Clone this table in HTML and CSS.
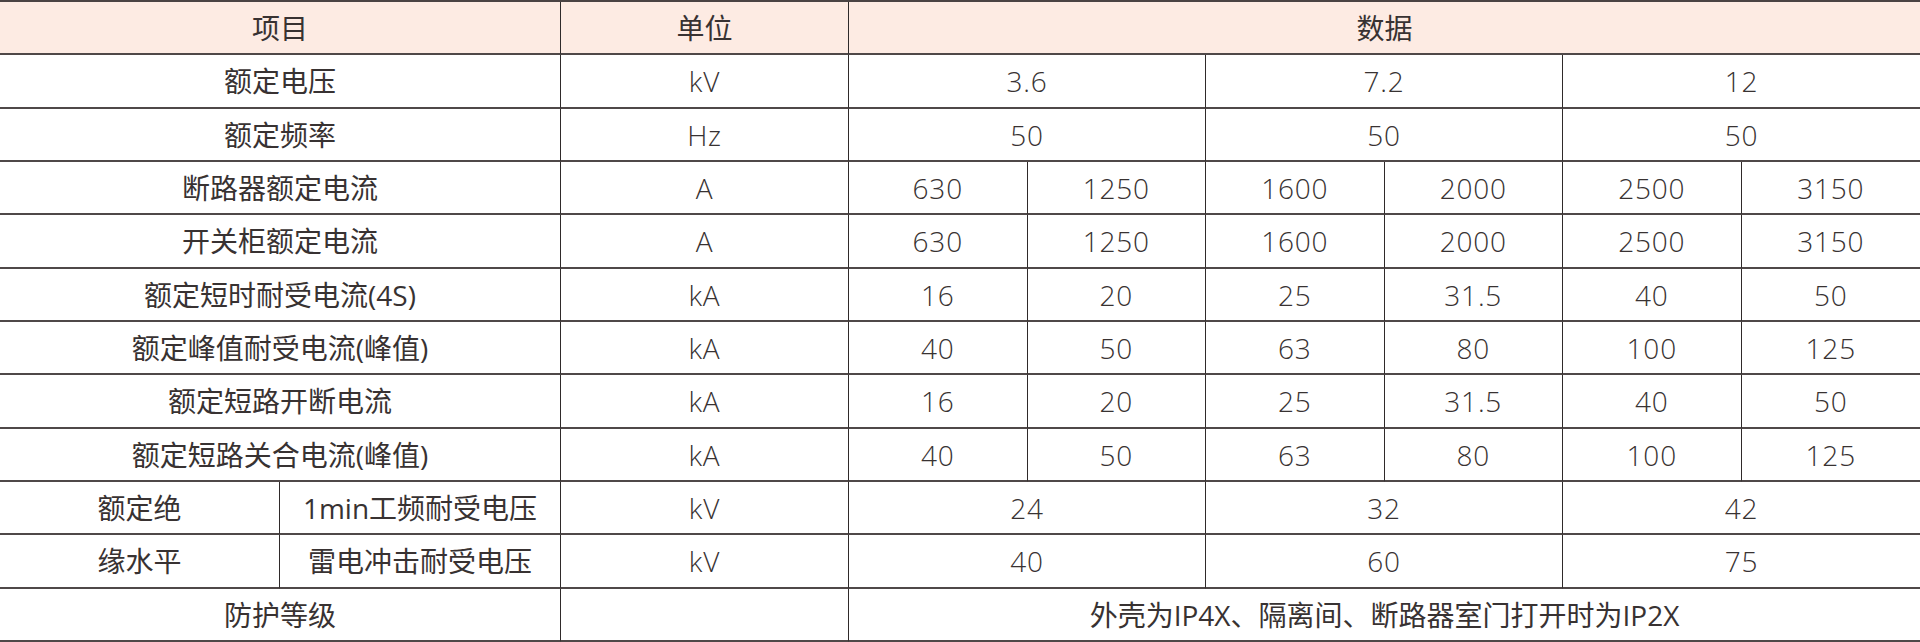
FILE: index.html
```html
<!DOCTYPE html>
<html lang="zh-CN">
<head>
<meta charset="utf-8">
<title>技术参数</title>
<link rel="stylesheet" href="styles.css">
</head>
<body>
<div class="spec">
  <div class="c head s2">项目</div>
  <div class="c head">单位</div>
  <div class="c head s6 last">数据</div>

  <div class="c s2">额定电压</div>
  <div class="c n">kV</div>
  <div class="c n s2">3.6</div>
  <div class="c n s2">7.2</div>
  <div class="c n s2 last">12</div>

  <div class="c s2">额定频率</div>
  <div class="c n">Hz</div>
  <div class="c n s2">50</div>
  <div class="c n s2">50</div>
  <div class="c n s2 last">50</div>

  <div class="c s2">断路器额定电流</div>
  <div class="c n">A</div>
  <div class="c n">630</div><div class="c n">1250</div><div class="c n">1600</div><div class="c n">2000</div><div class="c n">2500</div><div class="c n last">3150</div>

  <div class="c s2">开关柜额定电流</div>
  <div class="c n">A</div>
  <div class="c n">630</div><div class="c n">1250</div><div class="c n">1600</div><div class="c n">2000</div><div class="c n">2500</div><div class="c n last">3150</div>

  <div class="c s2">额定短时耐受电流(4S)</div>
  <div class="c n">kA</div>
  <div class="c n">16</div><div class="c n">20</div><div class="c n">25</div><div class="c n">31.5</div><div class="c n">40</div><div class="c n last">50</div>

  <div class="c s2">额定峰值耐受电流(峰值)</div>
  <div class="c n">kA</div>
  <div class="c n">40</div><div class="c n">50</div><div class="c n">63</div><div class="c n">80</div><div class="c n">100</div><div class="c n last">125</div>

  <div class="c s2">额定短路开断电流</div>
  <div class="c n">kA</div>
  <div class="c n">16</div><div class="c n">20</div><div class="c n">25</div><div class="c n">31.5</div><div class="c n">40</div><div class="c n last">50</div>

  <div class="c s2">额定短路关合电流(峰值)</div>
  <div class="c n">kA</div>
  <div class="c n">40</div><div class="c n">50</div><div class="c n">63</div><div class="c n">80</div><div class="c n">100</div><div class="c n last">125</div>

  <div class="c">额定绝</div>
  <div class="c">1min工频耐受电压</div>
  <div class="c n">kV</div>
  <div class="c n s2">24</div>
  <div class="c n s2">32</div>
  <div class="c n s2 last">42</div>

  <div class="c">缘水平</div>
  <div class="c">雷电冲击耐受电压</div>
  <div class="c n">kV</div>
  <div class="c n s2">40</div>
  <div class="c n s2">60</div>
  <div class="c n s2 last">75</div>

  <div class="c s2">防护等级</div>
  <div class="c"></div>
  <div class="c s6 last">外壳为IP4X、隔离间、断路器室门打开时为IP2X</div>
</div>
</body>
</html>
```

FILE: styles.css
```css
html, body {
  margin: 0;
  padding: 0;
  background: #ffffff;
}

.spec {
  display: grid;
  grid-template-columns: 280px 281px 288px repeat(6, 1fr);
  grid-template-rows: repeat(12, 1fr);
  width: 1920px;
  height: 642px;
  box-sizing: border-box;
  border-top: 2px solid #4a4343;
  font-family: "Open Sans", "Noto Sans CJK SC", sans-serif;
  font-size: 28px;
  color: #383232;
}

.c {
  display: flex;
  align-items: center;
  justify-content: center;
  box-sizing: border-box;
  border-right: 1px solid #2f2a2a;
  border-bottom: 2px solid #4f4848;
  white-space: nowrap;
  line-height: 1;
  padding-top: 1px;
}

.c.last {
  border-right: none;
}

.head {
  background: #fdebe3;
}

.n {
  letter-spacing: 0.8px;
  font-weight: 350;
}

.s2 {
  grid-column: span 2;
}

.s6 {
  grid-column: span 6;
}
```
